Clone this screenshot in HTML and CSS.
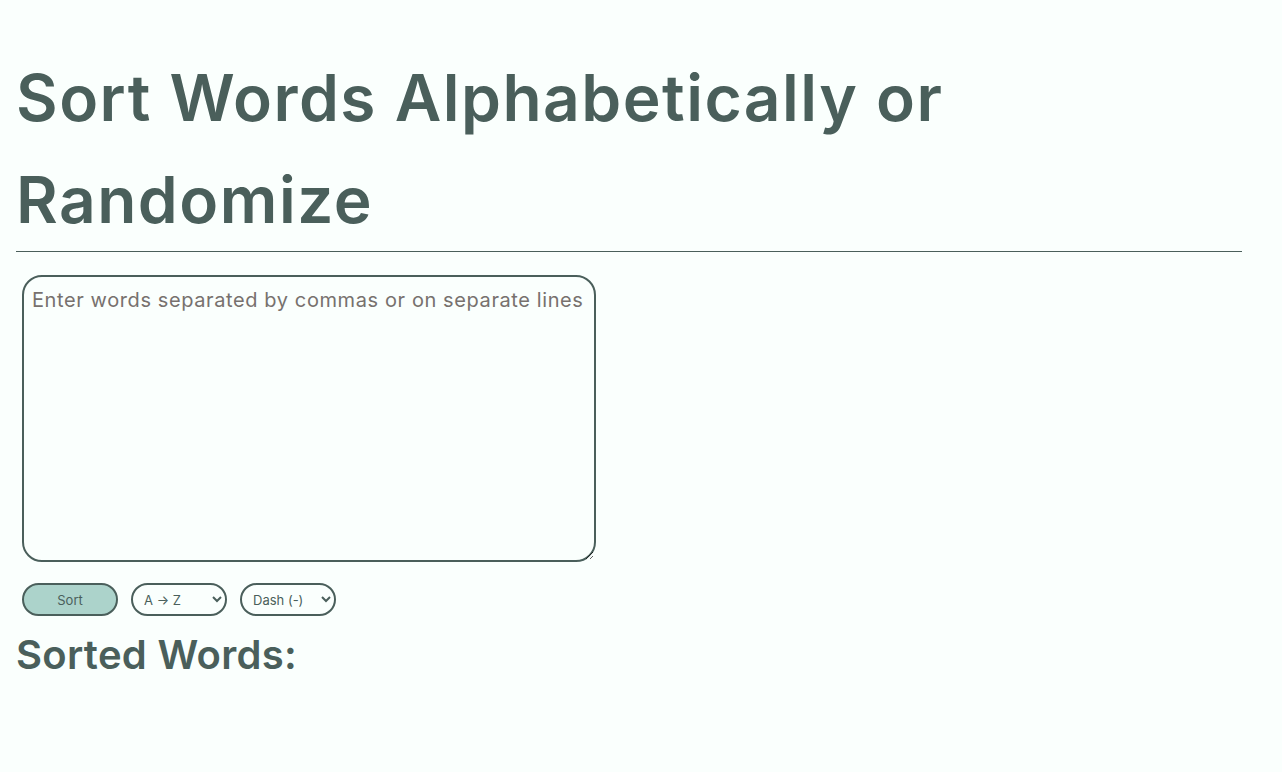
FILE: index.html
```html
<!DOCTYPE html>
<html lang="en">
<head>
    <meta charset="UTF-8">
    <meta name="viewport" content="width=device-width, initial-scale=1.0">
    <title>Sort Words Alphabetically or Randomize</title>
    <link rel="stylesheet" href="styles.css">
</head>
<body>
    <h1 class="title">Sort Words Alphabetically or Randomize</h1>

    <div class="sorter">
        <textarea id="word-input" class="word-input" placeholder="Enter words separated by commas or on separate lines"></textarea>

        <div class="controls">
            <button class="sort-button" id="sort-button">Sort</button>
            <select class="pill-select" id="sort-order">
                <option value="az">A → Z</option>
                <option value="za">Z → A</option>
                <option value="random">Random</option>
            </select>
            <select class="pill-select" id="separator">
                <option value="-">Dash (-)</option>
                <option value=",">Comma (,)</option>
                <option value="\n">New line</option>
            </select>
        </div>
    </div>

    <h2 class="result-heading">Sorted Words:</h2>
    <div class="result" id="result"></div>
</body>
</html>
```

FILE: styles.css
```css
body {
    font-family: 'Inter', 'Lato', sans-serif;
    background-color: #fafffd;
    color: #4a5f5b;
    margin: 0;
    padding: 0 40px 0 16px;
}

.title {
    font-size: 64px;
    font-weight: 600;
    letter-spacing: 1.5px;
    line-height: 102px;
    margin: 47px 0 0;
    border-bottom: 1px solid #4a5f5b;
}

.sorter {
    padding: 23px 6px 0;
}

.word-input {
    display: block;
    width: 574px;
    height: 287px;
    box-sizing: border-box;
    padding: 11px 8px 8px;
    font-family: inherit;
    font-size: 20px;
    letter-spacing: 0.6px;
    color: #4a5f5b;
    background-color: transparent;
    border: 2px solid #4a5f5b;
    border-radius: 20px;
}

.word-input::placeholder {
    color: #77716e;
}

.controls {
    display: flex;
    gap: 13px;
    margin-top: 21px;
}

.sort-button,
.pill-select {
    width: 96px;
    height: 33px;
    font-family: inherit;
    font-size: 13px;
    color: #4a5f5b;
    border: 2px solid #4a5f5b;
    border-radius: 20px;
}

.sort-button {
    background-color: #acd3cb;
    cursor: pointer;
}

.pill-select {
    background-color: transparent;
    padding: 0 6px 0 7px;
}

.result-heading {
    font-size: 40px;
    font-weight: 600;
    letter-spacing: 0.3px;
    line-height: 48px;
    margin: 15px 0 0;
}
```
